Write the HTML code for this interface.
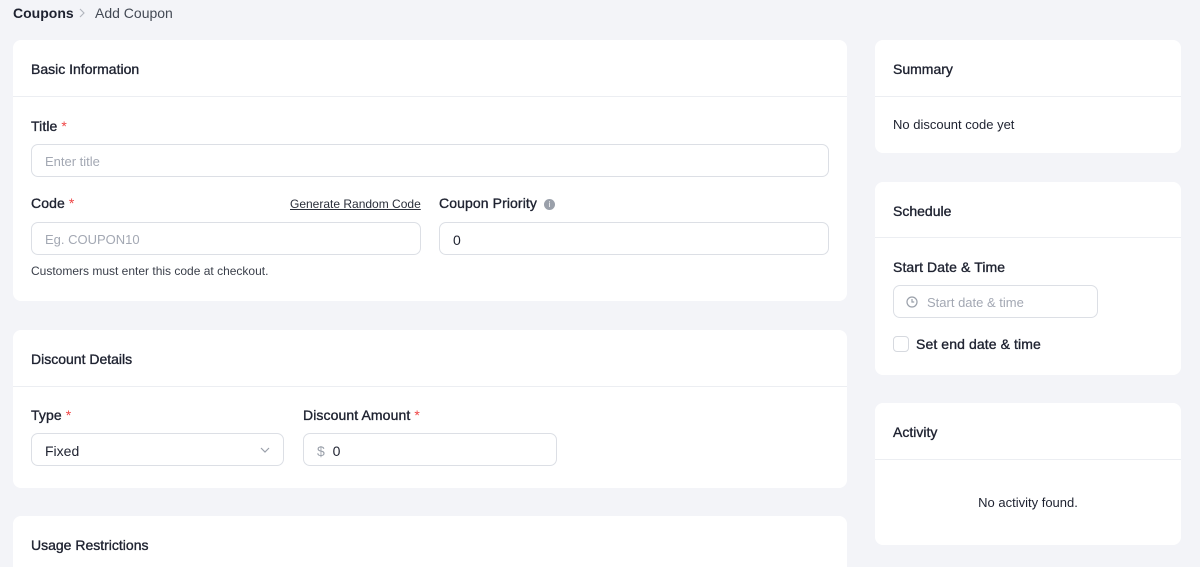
<!DOCTYPE html><html><head><style>
*{box-sizing:border-box;margin:0;padding:0}
html,body{width:1200px;height:567px;overflow:hidden}
body{background:#f3f4f8;font-family:"Liberation Sans",sans-serif;color:#1e2230;font-size:14px;position:relative}
.a{position:absolute}
.card{position:absolute;background:#fff;border-radius:8px}
.hd{position:absolute;left:0;right:0;top:0;height:57px;border-bottom:1px solid #eceef2}
.ht{position:absolute;left:18px;top:21px;font-size:14px;color:#1e2230;-webkit-text-stroke:.35px #1e2230}
.lbl{position:absolute;font-size:14px;letter-spacing:.1px;-webkit-text-stroke:.35px #1e2230}
.req{color:#ef4444;-webkit-text-stroke:0}
.inp{position:absolute;height:33px;border:1px solid #dcdfe5;border-radius:7px;font-size:13px;padding:9px 13px;color:#a3a8b3}
.val{color:#1e2230;font-size:14px}
</style></head><body>
<div class="a" style="left:13px;top:5px;font-weight:700;font-size:14px">Coupons</div>
<svg class="a" style="left:79px;top:8px" width="6" height="10" viewBox="0 0 6 10"><path d="M1 1l4 4-4 4" fill="none" stroke="#b0b4bc" stroke-width="1.1"/></svg>
<div class="a" style="left:95px;top:5px;color:#444a55;font-size:14px">Add Coupon</div>

<div class="card" style="left:13px;top:40px;width:834px;height:261px">
<div class="hd"><div class="ht">Basic Information</div></div>
<div class="lbl" style="left:18px;top:78px">Title <span class="req">*</span></div>
<div class="inp" style="left:18px;top:104px;width:798px">Enter title</div>
<div class="lbl" style="left:18px;top:155px">Code <span class="req">*</span></div>
<div class="a" style="left:277px;top:157px;font-size:12px;text-decoration:underline;color:#2a2f3a">Generate Random Code</div>
<div class="inp" style="left:18px;top:182px;width:390px">Eg. COUPON10</div>
<div class="lbl" style="left:426px;top:155px">Coupon Priority <span style="display:inline-block;width:11px;height:11px;border-radius:50%;background:#9aa0aa;color:#fff;font-size:8px;text-align:center;line-height:11px;vertical-align:1px;margin-left:3px;-webkit-text-stroke:0">i</span></div>
<div class="inp val" style="left:426px;top:182px;width:390px">0</div>
<div class="a" style="left:18px;top:224px;font-size:12px;color:#3a3f4a">Customers must enter this code at checkout.</div>
</div>

<div class="card" style="left:13px;top:330px;width:834px;height:158px">
<div class="hd" style="height:57px"><div class="ht">Discount Details</div></div>
<div class="lbl" style="left:18px;top:77px">Type <span class="req">*</span></div>
<div class="inp val" style="left:18px;top:103px;width:253px">Fixed<svg style="position:absolute;right:13px;top:13px" width="10" height="6" viewBox="0 0 10 6"><path d="M1 1l4 4 4-4" fill="none" stroke="#9aa0aa" stroke-width="1.2"/></svg></div>
<div class="lbl" style="left:290px;top:77px">Discount Amount <span class="req">*</span></div>
<div class="inp val" style="left:290px;top:103px;width:254px"><span style="color:#9aa0aa">$</span>&nbsp; 0</div>
</div>

<div class="card" style="left:13px;top:516px;width:834px;height:51px;border-radius:8px 8px 0 0">
<div class="ht" style="top:21px">Usage Restrictions</div>
</div>

<div class="card" style="left:875px;top:40px;width:306px;height:113px">
<div class="hd"><div class="ht">Summary</div></div>
<div class="a" style="left:18px;top:77px;font-size:13px">No discount code yet</div>
</div>

<div class="card" style="left:875px;top:182px;width:306px;height:193px">
<div class="hd" style="height:56px"><div class="ht">Schedule</div></div>
<div class="lbl" style="left:18px;top:77px">Start Date &amp; Time</div>
<div class="inp" style="left:18px;top:103px;width:205px;padding-left:33px">
<svg style="position:absolute;left:12px;top:10px" width="12" height="12" viewBox="0 0 12 12"><circle cx="6" cy="6" r="5" fill="none" stroke="#9aa0aa" stroke-width="1.2"/><path d="M6 3v3h2.2" fill="none" stroke="#9aa0aa" stroke-width="1.2"/></svg>Start date &amp; time</div>
<div class="a" style="left:18px;top:154px;width:16px;height:16px;border:1px solid #d6d9df;border-radius:4px"></div>
<div class="lbl" style="left:41px;top:154px">Set end date &amp; time</div>
</div>

<div class="card" style="left:875px;top:403px;width:306px;height:142px">
<div class="hd"><div class="ht">Activity</div></div>
<div class="a" style="left:0;right:0;top:92px;text-align:center;font-size:13px">No activity found.</div>
</div>
</body></html>
